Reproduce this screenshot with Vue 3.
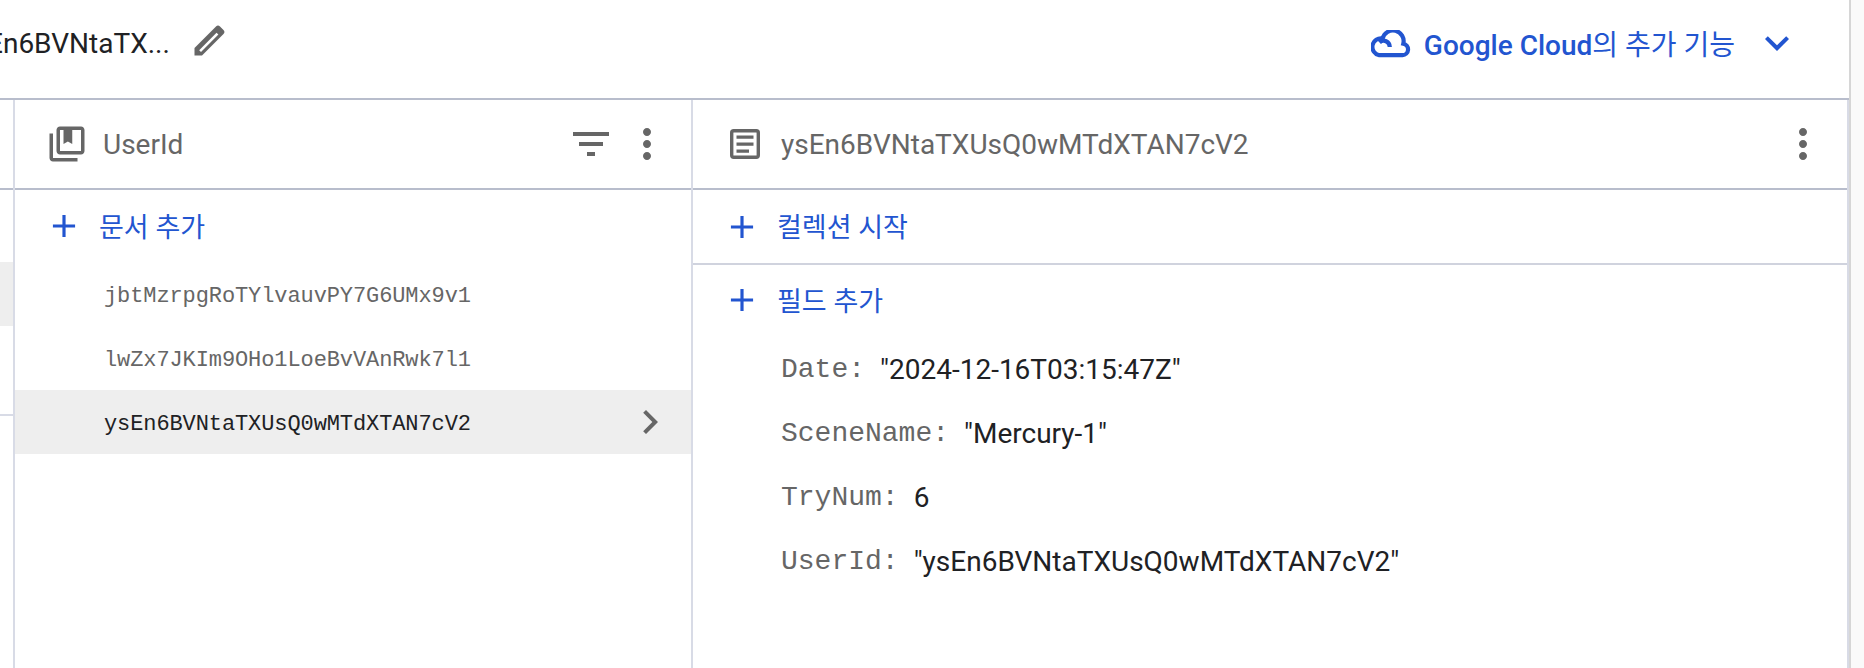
<script setup>
const docs = [
  { id: 'jbtMzrpgRoTYlvauvPY7G6UMx9v1', active: false },
  { id: 'lwZx7JKIm9OHo1LoeBvVAnRwk7l1', active: false },
  { id: 'ysEn6BVNtaTXUsQ0wMTdXTAN7cV2', active: true }
]
const fields = [
  { key: 'Date', value: '"2024-12-16T03:15:47Z"' },
  { key: 'SceneName', value: '"Mercury-1"' },
  { key: 'TryNum', value: '6' },
  { key: 'UserId', value: '"ysEn6BVNtaTXUsQ0wMTdXTAN7cV2"' }
]
</script>

<template>
  <div class="page">
    <main class="panel">
      <header class="top">
        <div class="crumb">
          <span class="crumb-text">En6BVNtaTX...</span>
          <svg class="pencil" viewBox="0 0 50 50" width="50" height="50"><path fill="#666" fill-rule="evenodd" d="M8.5 40.5V33L30 11.5Q32 9.6 34 11.5L37.5 15Q39.4 17 37.5 19L16 40.5ZM13.2 35.2L15 37L32.4 19.6L30.5 17.8Z"/></svg>
        </div>
        <div class="cloud-link">
          <svg class="cloud" viewBox="0 0 40 28" width="40" height="28"><path fill="none" stroke="#2255d0" stroke-width="4.2" d="M8.2 25.2H31.5A5.8 5.8 0 0 0 32.3 13.7A10.6 10.6 0 0 0 11.6 8.5A8.4 8.4 0 0 0 8.2 25.2ZM8.5 12.5C12.5 8.8 18.6 11.3 18.8 17"/></svg>
          <span class="cloud-text"><b>Google Cloud</b>의 추가 기능</span>
          <svg class="chev" viewBox="0 0 24 24" width="48" height="48"><path fill="#2255d0" d="M16.59 8.59L12 13.17 7.41 8.59 6 10l6 6 6-6z"/></svg>
        </div>
      </header>
      <section class="columns">
        <div class="col stub">
          <div class="stub-head"></div>
          <div class="stub-add"></div>
          <div class="stub-sel"></div>
          <div class="stub-row"></div>
        </div>
        <div class="col list">
          <div class="col-head">
            <svg viewBox="0 0 24 24" width="42" height="42" class="head-icon book"><path fill="#666" d="M4 6H2v14c0 1.1.9 2 2 2h14v-2H4V6zm16-4H8c-1.1 0-2 .9-2 2v12c0 1.1.9 2 2 2h12c1.1 0 2-.9 2-2V4c0-1.1-.9-2-2-2zm0 14H8V4h2v8l2.5-1.5L15 12V4h5v12z"/></svg>
            <span class="col-title">UserId</span>
            <svg viewBox="0 0 24 24" width="48" height="48" class="filter"><path fill="#666" d="M10 18h4v-2h-4v2zM3 6v2h18V6H3zm3 7h12v-2H6v2z"/></svg>
            <svg viewBox="0 0 24 24" width="48" height="48" class="more"><path fill="#666" d="M12 8c1.1 0 2-.9 2-2s-.9-2-2-2-2 .9-2 2 .9 2 2 2zm0 2c-1.1 0-2 .9-2 2s.9 2 2 2 2-.9 2-2-.9-2-2-2zm0 6c-1.1 0-2 .9-2 2s.9 2 2 2 2-.9 2-2-.9-2-2-2z"/></svg>
          </div>
          <div class="add-row">
            <svg viewBox="0 0 24 24" width="38" height="38"><path fill="#2255d0" d="M19 13h-6v6h-2v-6H5v-2h6V5h2v6h6v2z"/></svg>
            <span class="add-label">문서 추가</span>
          </div>
          <ul class="docs">
            <li v-for="d in docs" :key="d.id" class="doc" :class="{ active: d.active }">
              <span class="doc-id">{{ d.id }}</span>
              <svg v-if="d.active" viewBox="0 0 24 24" width="48" height="48"><path fill="#666" d="M8.59 16.59L13.17 12 8.59 7.41 10 6l6 6-6 6z"/></svg>
            </li>
          </ul>
        </div>
        <div class="col detail">
          <div class="col-head">
            <svg viewBox="0 0 40 40" width="40" height="40" class="head-icon"><rect x="6.7" y="6.7" width="26.6" height="26.6" rx="2" fill="none" stroke="#666" stroke-width="3.4"/><path fill="#666" d="M11.5 11.5h17v3.2h-17zm0 7h17v3.2h-17zm0 7h12.5v3.2h-12.5z"/></svg>
            <span class="col-title">ysEn6BVNtaTXUsQ0wMTdXTAN7cV2</span>
            <svg viewBox="0 0 24 24" width="48" height="48" class="more"><path fill="#666" d="M12 8c1.1 0 2-.9 2-2s-.9-2-2-2-2 .9-2 2 .9 2 2 2zm0 2c-1.1 0-2 .9-2 2s.9 2 2 2 2-.9 2-2-.9-2-2-2zm0 6c-1.1 0-2 .9-2 2s.9 2 2 2 2-.9 2-2-.9-2-2-2z"/></svg>
          </div>
          <div class="add-row boxed">
            <svg viewBox="0 0 24 24" width="38" height="38"><path fill="#2255d0" d="M19 13h-6v6h-2v-6H5v-2h6V5h2v6h6v2z"/></svg>
            <span class="add-label">컬렉션 시작</span>
          </div>
          <div class="add-row field-add">
            <svg viewBox="0 0 24 24" width="38" height="38"><path fill="#2255d0" d="M19 13h-6v6h-2v-6H5v-2h6V5h2v6h6v2z"/></svg>
            <span class="add-label">필드 추가</span>
          </div>
          <ul class="fields">
            <li v-for="f in fields" :key="f.key" class="field">
              <span class="key">{{ f.key }}:</span>
              <span class="val">{{ f.value }}</span>
            </li>
          </ul>
        </div>
      </section>
    </main>
  </div>
</template>

<style scoped>
.page {
  width: 1864px;
  height: 668px;
  overflow: hidden;
  background: #fafafa;
  font-family: Roboto, "Noto Sans CJK KR", sans-serif;
  box-sizing: border-box;
  padding-right: 15px;
}
.panel {
  height: 100%;
  display: flex;
  flex-direction: column;
  background: #fff;
  box-shadow: 2px 0 0 #d6d6d6;
}
.top {
  height: 98px;
  flex: none;
  box-sizing: content-box;
  border-bottom: 2px solid #b8bdcc;
  display: flex;
  align-items: center;
  justify-content: space-between;
}
.crumb {
  display: flex;
  align-items: center;
  padding-bottom: 11px;
  min-width: 0;
}
.crumb-text {
  font-size: 28px;
  color: #202124;
  margin-left: -13px;
  white-space: nowrap;
}
.pencil {
  margin-left: 16px;
  margin-bottom: 7px;
  flex: none;
}
.cloud-link {
  display: flex;
  align-items: center;
  color: #2255d0;
  padding-bottom: 12px;
  margin-right: 48px;
}
.cloud {
  margin-top: 2px;
}
.cloud-text {
  font-size: 28px;
  font-weight: 400;
  margin-left: 13px;
  white-space: nowrap;
}
.cloud-text b {
  font-weight: 500;
}
.chev {
  margin-left: 18px;
}
.columns {
  flex: 1;
  display: flex;
  min-height: 0;
}
.col {
  box-sizing: border-box;
  height: 100%;
}
.stub {
  width: 15px;
  flex: none;
  border-right: 2px solid #d8dbe6;
}
.stub-head { height: 88px; border-bottom: 2px solid #b8bdcc; box-sizing: content-box; }
.stub-add { height: 72px; }
.stub-sel { height: 64px; background: #eeeeee; }
.stub-row { height: 88px; border-bottom: 2px solid #d8dbe6; }
.list {
  width: 678px;
  flex: none;
  border-right: 2px solid #d8dbe6;
}
.detail {
  flex: 1;
  min-width: 0;
  border-right: 2px solid #d8dbe6;
}
.col-head {
  height: 88px;
  border-bottom: 2px solid #b8bdcc;
  box-sizing: content-box;
  display: flex;
  align-items: center;
  padding: 0 20px 0 32px;
}
.head-icon { flex: none; }
.book { margin-left: -1px; margin-right: -1px; }
.col-title {
  font-size: 28px;
  color: #666;
  margin-left: 16px;
  flex: 1;
}
.filter { margin-right: 8px; }
.add-row {
  display: flex;
  align-items: center;
  color: #2255d0;
  font-size: 27px;
  height: 72px;
  padding-left: 30px;
  gap: 16px;
}
.add-label {
  padding-bottom: 2px;
}
.boxed {
  box-sizing: content-box;
  height: 73px;
  border-bottom: 2px solid #d0d3de;
}
.field-add {
  box-sizing: content-box;
  height: 70px;
  padding-bottom: 2px;
}
.docs, .fields {
  list-style: none;
  margin: 0;
  padding: 0;
}
.doc {
  height: 64px;
  display: flex;
  align-items: center;
  justify-content: space-between;
  padding: 0 17px 0 89px;
  font-family: "Liberation Mono", monospace;
  font-size: 22px;
  letter-spacing: -0.1px;
  color: #666;
}
.doc-id {
  padding-top: 4px;
}
.doc.active {
  background: #eee;
  color: #202124;
}
.fields {
  padding-left: 88px;
}
.field {
  height: 64px;
  display: flex;
  align-items: center;
  gap: 15px;
}
.key {
  font-family: "Liberation Mono", monospace;
  font-size: 28px;
  color: #666;
}
.val {
  font-size: 28px;
  color: #202124;
}
</style>
